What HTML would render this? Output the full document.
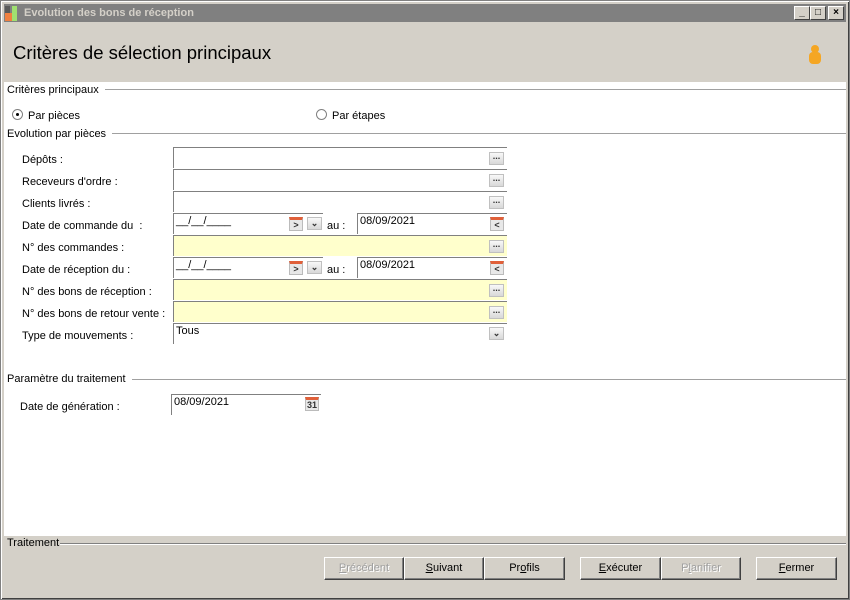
<!DOCTYPE html>
<html><head><meta charset="utf-8"><style>
*{box-sizing:border-box;margin:0;padding:0}
body{width:850px;height:600px;background:#d4d0c8;font-family:"Liberation Sans",sans-serif;font-size:11px;color:#000;position:relative;overflow:hidden}
.a{position:absolute}
.win{left:0;top:0;width:850px;height:600px;border:1px solid #808080;box-shadow:inset 1px 1px 0 #fff,inset -1px -1px 0 #404040}
.title{left:4px;top:4px;width:842px;height:18px;background:#808080;color:#d4d0c8;font-weight:bold;font-size:11px;line-height:18px;padding-left:20px}
.hdr{left:13px;top:42px;font-size:18.5px;font-family:"Liberation Sans",sans-serif}
.white{left:4px;top:82px;width:842px;height:454px;background:#fff}
.leg{background:#fff;padding-right:6px}
.line{height:2px;border-top:1px solid #a0a0a0;border-bottom:1px solid #fff}
.in{height:21px;border-top:1px solid #808080;border-left:1px solid #808080;background:#fff;padding:1px 2px;font-size:11px}
.y{background:#ffffcc}
.dots{width:15px;height:13px;background:linear-gradient(#f8f8f8,#d8d8d8);border:1px solid #c0c0c0;font-size:9px;line-height:6px;text-align:center;font-weight:bold;color:#333}
.cal{width:14px;height:14px;background:#e8e8e8;border:1px solid #bbb;border-top:3px solid #e0603a;font-size:9px;line-height:10px;text-align:center;color:#333;font-weight:bold}
.btn{top:557px;height:23px;border:1px solid;border-color:#fff #404040 #404040 #fff;box-shadow:inset -1px -1px 0 #808080;text-align:center;line-height:21px;font-size:11px}
.dis{color:#a0a0a0;text-shadow:1px 1px 0 #fff}
.tb{width:16px;height:14px;top:6px;background:#d4d0c8;border:1px solid;border-color:#fff #404040 #404040 #fff;font-size:10px;line-height:12px;text-align:center;font-weight:bold}
.lb{margin-top:1px}
</style></head><body>
<div class="a win"></div>
<div class="a title">Evolution des bons de réception</div>
<div class="a" style="left:5px;top:6px;width:5px;height:15px;background:#5a5a5a"></div>
<div class="a" style="left:5px;top:13px;width:7px;height:8px;background:#f08040"></div>
<div class="a" style="left:12px;top:6px;width:5px;height:15px;background:#a0e070"></div>
<div class="a tb" style="left:794px">_</div>
<div class="a tb" style="left:810px">□</div>
<div class="a tb" style="left:828px">×</div>
<div class="a hdr">Critères de sélection principaux</div>
<svg class="a" style="left:806px;top:43px" width="18" height="22"><circle cx="9" cy="6" r="4" fill="#f5a623"/><rect x="3" y="9" width="12" height="12" rx="4" fill="#f5a623"/></svg>
<div class="a white"></div>

<div class="a line" style="left:100px;top:89px;width:746px"></div>
<div class="a leg" style="left:7px;top:84px">Critères principaux</div>
<div class="a" style="left:12px;top:109px;width:11px;height:11px;border-radius:50%;border:1px solid #808080;background:#fff"><div style="margin:3px;width:3px;height:3px;background:#000;border-radius:50%"></div></div>
<div class="a" style="left:28px;top:110px">Par pièces</div>
<div class="a" style="left:316px;top:109px;width:11px;height:11px;border-radius:50%;border:1px solid #808080;background:#fff"></div>
<div class="a" style="left:332px;top:110px">Par étapes</div>

<div class="a line" style="left:105px;top:133px;width:741px"></div>
<div class="a leg" style="left:7px;top:128px">Evolution par pièces</div>

<div class="a" style="left:22px;top:154px">Dépôts :</div>
<div class="a in" style="left:173px;top:147px;width:334px"></div>
<div class="a" style="left:22px;top:176px">Receveurs d'ordre :</div>
<div class="a in" style="left:173px;top:169px;width:334px"></div>
<div class="a" style="left:22px;top:198px">Clients livrés :</div>
<div class="a in" style="left:173px;top:191px;width:334px"></div>
<div class="a" style="left:22px;top:220px">Date de commande du&nbsp; :</div>
<div class="a in" style="left:173px;top:213px;width:150px">__/__/____</div>
<div class="a" style="left:327px;top:220px">au :</div>
<div class="a in" style="left:357px;top:213px;width:150px">08/09/2021</div>
<div class="a" style="left:22px;top:242px">N° des commandes :</div>
<div class="a in y" style="left:173px;top:235px;width:334px"></div>
<div class="a" style="left:22px;top:264px">Date de réception du :</div>
<div class="a in" style="left:173px;top:257px;width:150px">__/__/____</div>
<div class="a" style="left:327px;top:264px">au :</div>
<div class="a in" style="left:357px;top:257px;width:150px">08/09/2021</div>
<div class="a" style="left:22px;top:286px">N° des bons de réception :</div>
<div class="a in y" style="left:173px;top:279px;width:334px"></div>
<div class="a" style="left:22px;top:308px">N° des bons de retour vente :</div>
<div class="a in y" style="left:173px;top:301px;width:334px"></div>
<div class="a" style="left:22px;top:330px">Type de mouvements :</div>
<div class="a in" style="left:173px;top:323px;width:334px">Tous</div>

<div class="a dots" style="left:489px;top:152px">...</div>
<div class="a dots" style="left:489px;top:174px">...</div>
<div class="a dots" style="left:489px;top:196px">...</div>
<div class="a dots" style="left:489px;top:240px">...</div>
<div class="a dots" style="left:489px;top:284px">...</div>
<div class="a dots" style="left:489px;top:306px">...</div>
<div class="a cal" style="left:289px;top:217px">&gt;</div>
<div class="a dots" style="left:307px;top:217px;line-height:11px;font-size:9px">⌄</div>
<div class="a cal" style="left:490px;top:217px">&lt;</div>
<div class="a cal" style="left:289px;top:261px">&gt;</div>
<div class="a dots" style="left:307px;top:261px;line-height:11px">⌄</div>
<div class="a cal" style="left:490px;top:261px">&lt;</div>
<div class="a dots" style="left:489px;top:327px;line-height:11px">⌄</div>

<div class="a line" style="left:128px;top:379px;width:718px"></div>
<div class="a leg" style="left:7px;top:373px">Paramètre du traitement</div>
<div class="a" style="left:20px;top:401px">Date de génération :</div>
<div class="a in" style="left:171px;top:394px;width:150px">08/09/2021</div>
<div class="a cal" style="left:305px;top:397px">31</div>

<div class="a line" style="left:58px;top:543px;width:788px;border-top-color:#808080"></div>
<div class="a" style="left:7px;top:537px;background:#d4d0c8;padding-right:1px">Traitement</div>

<div class="a btn dis" style="left:324px;width:80px"><u>P</u>récédent</div>
<div class="a btn" style="left:404px;width:80px"><u>S</u>uivant</div>
<div class="a btn" style="left:484px;width:81px">Pr<u>o</u>fils</div>
<div class="a btn" style="left:580px;width:81px"><u>E</u>xécuter</div>
<div class="a btn dis" style="left:661px;width:80px">P<u>l</u>anifier</div>
<div class="a btn" style="left:756px;width:81px"><u>F</u>ermer</div>
</body></html>
